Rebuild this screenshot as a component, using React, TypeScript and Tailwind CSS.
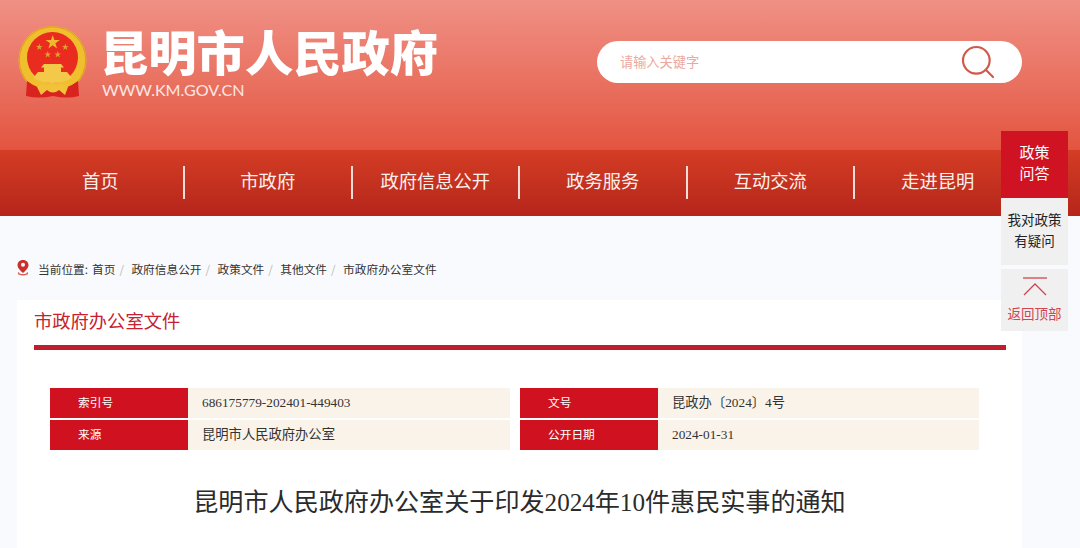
import { Search } from 'lucide-react'

const CJK = "font-['Noto_Sans_CJK_SC','Liberation_Sans',sans-serif]"

const NAV_ITEMS = ['首页', '市政府', '政府信息公开', '政务服务', '互动交流', '走进昆明']
const CRUMBS = ['政府信息公开', '政策文件', '其他文件']

// 国徽 drawn by hand, coordinates are page pixels
const Emblem = () => (
  <svg width="72" height="76" viewBox="15 25 72 76" className="shrink-0">
    <circle cx="51.5" cy="60" r="34" fill="#f0bf2e" />
    <circle cx="51.5" cy="60" r="33.2" fill="none" stroke="#e09a1c" strokeWidth="1" />
    <circle cx="51.5" cy="57.5" r="25.5" fill="#ea2b20" />
    <polygon points="51.7,35 53.4,40 58.8,40 54.4,43.2 56,48.4 51.7,45.2 47.4,48.4 49,43.2 44.6,40 50,40" fill="#eeb92f" />
    <polygon points="38.3,43.6 39.1,46 41.6,46 39.6,47.5 40.4,50 38.3,48.5 36.2,50 37,47.5 35,46 37.5,46" fill="#dfa32c" />
    <polygon points="64.3,43.6 65.1,46 67.6,46 65.6,47.5 66.4,50 64.3,48.5 62.2,50 63,47.5 61,46 63.5,46" fill="#dfa32c" />
    <polygon points="46.7,51 47.5,53.4 50,53.4 48,54.9 48.8,57.4 46.7,55.9 44.6,57.4 45.4,54.9 43.4,53.4 45.9,53.4" fill="#dfa32c" />
    <polygon points="56.7,51 57.5,53.4 60,53.4 58,54.9 58.8,57.4 56.7,55.9 54.6,57.4 55.4,54.9 53.4,53.4 55.9,53.4" fill="#dfa32c" />
    <path d="M43 64 H60 L63 67.5 H60 V72 H66 L71 78 Q62 83 51.5 83 Q41 83 32 78 L37 72 H43 V67.5 H40 Z" fill="#f4c94a" />
    <path d="M26 81 Q38 90 51.5 90 Q65 90 77 81 L78 96 Q66 99 52 96 Q38 99 25 96 Z" fill="#d9231f" />
    <path d="M36 87 Q42 82 46 86 Q51 82 56 86 Q60 82 67 87 L64 95 L58 90 Q52 95 46 90 L40 95 Z" fill="#f2c23a" />
  </svg>
)

const InfoRow = ({ label, value }: { label: string; value: string }) => (
  <div className="flex h-[30px] items-center">
    <div className={`${CJK} flex h-full w-[138px] items-center bg-[#d01220] pb-[2px] pl-7 text-[11.7px] text-white`}>{label}</div>
    <div className="flex h-full flex-1 items-center bg-[#f9f3ea] pb-[1px] pl-[14px] font-['Liberation_Serif','Noto_Sans_CJK_SC',serif] text-[13.3px] text-[#333]">
      {value}
    </div>
  </div>
)

export default function App() {
  return (
    <div className={`${CJK} relative h-[548px] w-[1080px] overflow-hidden bg-[#f9fafd]`}>
      {/* banner */}
      <header className="flex h-[150px] bg-gradient-to-b from-[#ef9085] to-[#e3543f] pl-[16px] pt-[25px]">
        <Emblem />
        <div className="ml-[14px] flex w-[336px] flex-col">
          <h1 className="-ml-[2px] text-[48.3px] leading-[50px] font-black whitespace-nowrap text-white">昆明市人民政府</h1>
          <p className="mt-[6px] font-['Lato',sans-serif] text-[16.1px] leading-[18px] text-[#fbe6e2]">WWW.KM.GOV.CN</p>
        </div>
        <div className="mt-[16px] ml-[159px] flex h-[42px] w-[425px] items-center justify-between rounded-full bg-white pr-[24px] pl-[23px]">
          <span className="text-[13.2px] text-[#eba89f]">请输入关键字</span>
          <Search size={40} strokeWidth={1.3} className="text-[#d1594c]" />
        </div>
      </header>

      {/* main nav */}
      <nav className="h-[66px] bg-gradient-to-b from-[#d43d25] to-[#b5251a] pl-[17.5px]">
        <ul className="grid h-full w-[1005px] grid-cols-6 items-center">
          {NAV_ITEMS.map((item, i) => (
            <li
              key={item}
              className={`-mt-[1px] flex h-[33px] items-center justify-center border-r-2 pb-[4px] text-[18.3px] text-[#fdf0ec] ${i < 5 ? 'border-[#f6dcd6]' : 'border-transparent'}`}
            >
              {item}
            </li>
          ))}
        </ul>
      </nav>

      {/* breadcrumb */}
      <div className="flex h-[84px] items-center pt-[22px] pl-[16px] text-[11.7px] text-[#333]">
        <svg width="14" height="18" viewBox="0 0 14 18" className="mr-2 -mt-[3px]">
          <path d="M7 1 C3.5 1 1.5 3.6 1.5 6.2 C1.5 9.2 5 12 7 14 C9 12 12.5 9.2 12.5 6.2 C12.5 3.6 10.5 1 7 1 Z" fill="#c9302c" />
          <circle cx="7" cy="5.8" r="2" fill="#f9fafd" />
          <path d="M3 13.5 C0 16.5 14 16.5 11 13.5" fill="none" stroke="#d9605a" strokeWidth="1.4" />
        </svg>
        <span className="mr-[4px]">当前位置:</span>
        <span>首页</span>
        {CRUMBS.map((c) => (
          <span key={c} className="flex items-center">
            <span className="mx-[4px] w-[3px] text-[#bbb]">/</span>
            <span className="ml-[5px]">{c}</span>
          </span>
        ))}
        <span className="mx-[4px] w-[3px] text-[#bbb]">/</span>
        <span className="ml-[5px]">市政府办公室文件</span>
      </div>

      {/* article card */}
      <main className="ml-[17px] h-[248px] w-[1005px] bg-white px-[17px]">
        <h2 className="flex h-[45px] items-center pb-[4px] text-[18.3px] text-[#c8202f]">市政府办公室文件</h2>
        <div className="h-[5px] w-[972px] bg-[#bf1e2b]" />

        <div className="mt-[38px] ml-[16px] grid w-[929px] grid-cols-[460px_459px] gap-x-[10px] gap-y-[2px]">
          <InfoRow label="索引号" value="686175779-202401-449403" />
          <InfoRow label="文号" value="昆政办〔2024〕4号" />
          <InfoRow label="来源" value="昆明市人民政府办公室" />
          <InfoRow label="公开日期" value="2024-01-31" />
        </div>

        <h3 className="mt-[36px] text-center font-['Liberation_Serif','Noto_Sans_CJK_SC',serif] text-[25.1px] leading-[34px] text-[#2b2b2b]">
          昆明市人民政府办公室关于印发2024年10件惠民实事的通知
        </h3>
      </main>

      {/* floating side tools */}
      <aside className="absolute top-[131px] left-[1001px] flex w-[67px] flex-col text-center">
        <div className="flex h-[67px] items-center justify-center bg-[#d01323] pb-[6px] text-[15px] leading-[21px] text-white">
          政策<br />问答
        </div>
        <div className="flex h-[67px] items-center justify-center bg-[#f0f0f0] pb-[4px] text-[13.5px] leading-[21px] text-[#222]">
          我对政策<br />有疑问
        </div>
        <div className="mt-[4px] flex h-[62px] flex-col items-center bg-[#f0f0f0] pt-[8px]">
          <svg width="26" height="20" viewBox="0 0 26 20" fill="none" stroke="#d2444f" strokeWidth="1.3">
            <path d="M1 1 H25" />
            <path d="M2 18 L13 7 L24 18" />
          </svg>
          <span className="mt-[7px] text-[13.5px] leading-[18px] text-[#d2444f]">返回顶部</span>
        </div>
      </aside>
    </div>
  )
}
